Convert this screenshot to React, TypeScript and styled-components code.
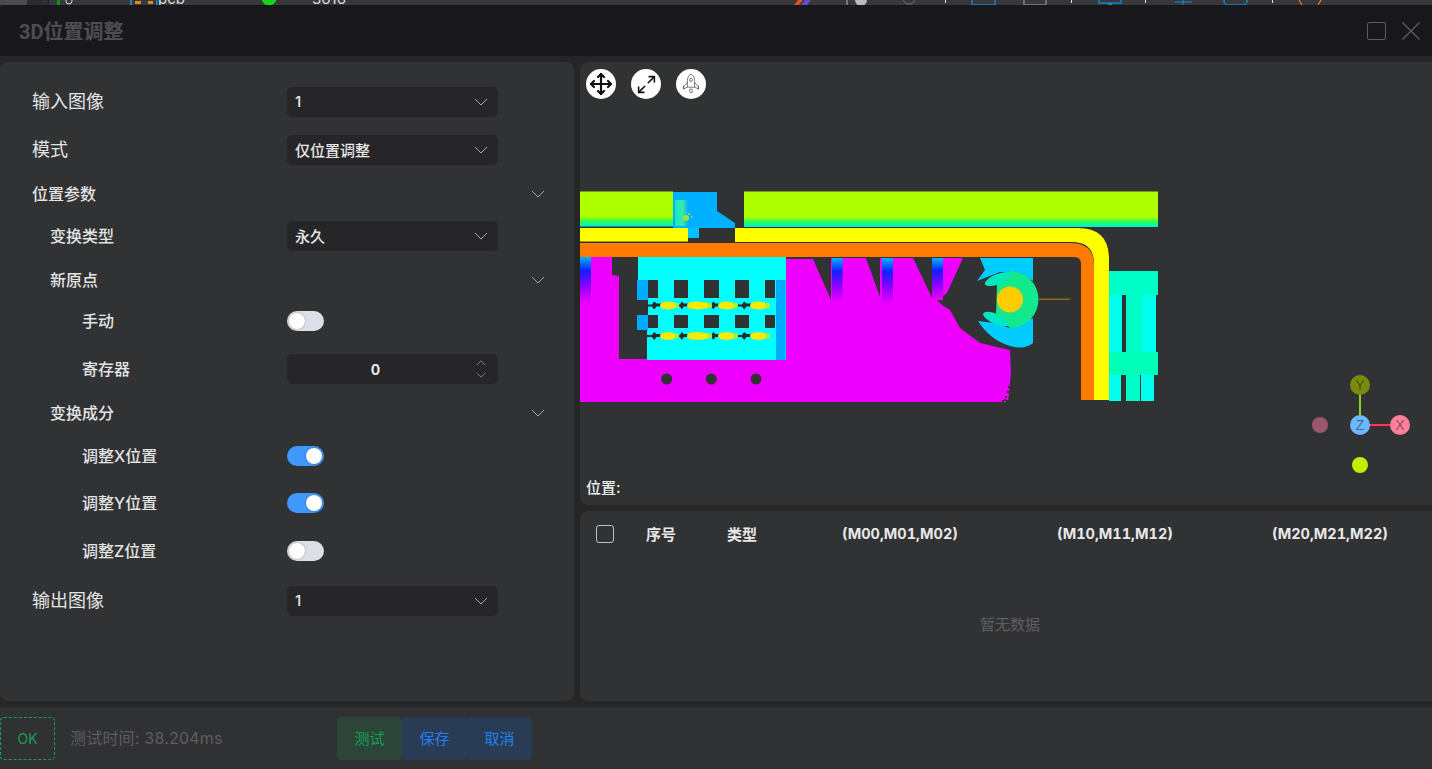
import styled, { createGlobalStyle } from "styled-components";
import { Move, Maximize2 } from "lucide-react";

const GlobalStyle = createGlobalStyle`
  html, body {
    margin: 0;
    padding: 0;
    background: #262627;
  }
  * { box-sizing: border-box; }
`;

const CJK = `"Inter", "Noto Sans CJK SC", sans-serif`;

// the window behind the dialog, only its lower edge is still visible
function BackWindowEdge() {
  return (
    <BackEdge viewBox="0 0 1432 5">
      <rect x="0" y="0" width="27" height="5" fill="#4a4b4e" />
      <rect x="27" y="0" width="15" height="5" fill="#2b2c2e" />
      <rect x="42" y="0" width="6" height="5" fill="#2f3032" />
      <rect x="48" y="0" width="1" height="5" fill="#222" />
      <rect x="57" y="0" width="3" height="5" fill="#1a8a1a" />
      <rect x="66" y="-6" width="6" height="10" rx="3" fill="none" stroke="#ddd" strokeWidth="1" />
      <rect x="130" y="0" width="2" height="5" fill="#1787c9" />
      <rect x="135" y="1" width="6" height="3" fill="#e08a1c" />
      <rect x="148" y="1" width="5" height="3" fill="#e08a1c" />
      <rect x="156" y="0" width="1.5" height="5" fill="#1787c9" />
      <text x="158" y="4" fill="#ddd" fontSize="15" fontFamily="Inter, sans-serif">pcb</text>
      <circle cx="269" cy="-2" r="7.5" fill="#19d319" />
      <text x="312" y="4" fill="#ddd" fontSize="15" fontFamily="Inter, sans-serif">3616</text>
      <path d="M794 5l4-5h5l-4 5z" fill="#e0561c" />
      <path d="M801 5l4-5h6l-4 5z" fill="#6050d0" />
      <rect x="846" y="0" width="2" height="5" fill="#777" />
      <circle cx="861" cy="0" r="6" fill="#bbb" />
      <circle cx="909" cy="-2" r="6" fill="none" stroke="#777" />
      {[945, 1071, 1145, 1272].map(x => <rect key={x} x={x} y="0" width="1" height="3" fill="#ddd" />)}
      <rect x="972" y="-4" width="23" height="9" fill="none" stroke="#1787c9" strokeWidth="1.4" />
      <rect x="1024" y="-4" width="22" height="9" fill="none" stroke="#888" strokeWidth="1.4" />
      <rect x="1099" y="-4" width="22" height="7" fill="none" stroke="#1787c9" strokeWidth="1.4" />
      <rect x="1108" y="3" width="4" height="2" fill="#1787c9" />
      <path d="M1175 2h17M1183 0v5" stroke="#1787c9" strokeWidth="1.2" />
      <rect x="1224" y="-8" width="23" height="13" rx="4" fill="none" stroke="#1787c9" strokeWidth="1.4" />
      <path d="M1299 0l3 5M1321 0l-3 5" stroke="#d98a1c" strokeWidth="1.2" />
    </BackEdge>
  );
}

function Chevron({ up }: { up?: boolean }) {
  return (
    <ChevronIcon viewBox="0 0 14 8">
      <path d={up ? "M1 7l6-6 6 6" : "M1 1l6 6 6-6"} />
    </ChevronIcon>
  );
}

function CloseIcon() {
  return (
    <svg width="18" height="18" viewBox="0 0 18 18" stroke="#5c5c60" strokeWidth="1.3">
      <path d="M0.500 0.500L17.500 17.500M17.500 0.500L0.500 17.500" />
    </svg>
  );
}

function RocketIcon() {
  return (
    <svg width="20" height="22" viewBox="0 0 20 22" fill="none" stroke="#444" strokeWidth="0.7">
      <path d="M10 1c2.600 1.600 3.600 4 3.600 6.600v6.600H6.400V7.600C6.400 5 7.400 2.600 10 1z" />
      <circle cx="10" cy="6.800" r="1.500" />
      <path d="M6.400 9.500L2.800 13.500v2.300l3.600-1.600M13.600 9.500l3.600 4v2.300l-3.600-1.600" />
      <path d="M2.500 12.500v4M17.500 12.500v4" />
      <ellipse cx="10" cy="17.800" rx="1.400" ry="2" />
    </svg>
  );
}

function Select({ value }: { value: string }) {
  return (
    <SelectBox>
      <SelectText>{value}</SelectText>
      <Chevron />
    </SelectBox>
  );
}

function Streak({ y }: { y: number }) {
  const spindles: [number, number][] = [[647, 16], [676, 13], [707, 14], [737, 16]];
  const blobs: [number, number][] = [[662, 12], [689, 18], [720, 13], [752, 13]];
  return (
    <g>
      {spindles.map(([x, w]) => (
        <path
          key={x}
          d={`M${x} ${y - 1}h${w * 0.3}l${w * 0.15} -3l${w * 0.15} 2h${w * 0.4}v3h${-w * 0.4}l${-w * 0.15} 3l${-w * 0.15} -3h${-w * 0.3}z`}
          fill="#2a2b2d"
        />
      ))}
      {blobs.map(([x, w]) => (
        <g key={x}>
          <rect x={x - 2} y={y - 2.500} width={w + 7} height="5" rx="2" fill="#a8f030" />
          <path
            d={`M${x} ${y - 3}l${w * 0.4} -1l${w * 0.6} 1l1 3l-1 3l${-w * 0.5} 1l${-w * 0.5} -1l-1 -3z`}
            fill="#f6ea00"
          />
        </g>
      ))}
    </g>
  );
}

function PointCloud() {
  const holeXs: [number, number][] = [[648, 10], [674, 14], [704, 15], [735, 14], [765, 10]];
  const speckles: [number, number][] = [[1005, 396], [1007, 391], [1004, 399], [1008, 386], [1002, 400], [1006, 400]];
  const bg = "#313234";
  return (
    <CloudSvg viewBox="580 62 860 443">
      <defs>
        <linearGradient id="bar" x1="0" y1="0" x2="0" y2="1">
          <stop offset="0" stopColor="#aeff00" />
          <stop offset="0.72" stopColor="#aeff00" />
          <stop offset="0.84" stopColor="#30ff50" />
          <stop offset="1" stopColor="#00f0d0" />
        </linearGradient>
        <linearGradient id="strip" x1="0" y1="0" x2="0" y2="1">
          <stop offset="0" stopColor="#00b4ff" />
          <stop offset="0.3" stopColor="#1020ff" />
          <stop offset="0.65" stopColor="#9000ff" />
          <stop offset="1" stopColor="#ee00ff" />
        </linearGradient>
        <linearGradient id="patch" x1="0" y1="0" x2="1" y2="0">
          <stop offset="0" stopColor="#10e8d0" />
          <stop offset="0.6" stopColor="#40e8a0" />
          <stop offset="1" stopColor="#00b0ff" />
        </linearGradient>
      </defs>

      <rect x="580" y="191.500" width="93" height="35" fill="url(#bar)" />
      <rect x="744" y="191.500" width="414" height="35.500" fill="url(#bar)" />
      <path d="M673 192H717V211L735 223V228H673Z" fill="#00b0ff" />
      <rect x="688" y="228" width="11" height="10" fill="#00c0ff" />
      <rect x="675" y="200" width="13" height="26" fill="url(#patch)" />
      <circle cx="686" cy="218" r="3" fill="#90e840" />
      <circle cx="689" cy="214" r="1" fill="#90e840" />
      <circle cx="692" cy="217" r="1" fill="#60e870" />

      <rect x="580" y="228" width="108" height="13.500" fill="#ffff00" />
      <path d="M735 228H1078Q1109 228 1109 259V400H1094V264Q1094 242 1072 242H735Z" fill="#ffff00" />
      <path d="M580 243H1070Q1094 243 1094 265V400H1081V264Q1081 257 1074 257H580Z" fill="#ff7a00" />

      <path
        d="M580 257H612V275L619 276V359H647V360H786V259H813L831 300V258H842V258H866L880 297V258H908L913 258L932 298V258H963L947 293L943 296L937 300L942 305L950 310L960 328L980 343L1010 350L1011 373L1008 402H580Z"
        fill="#ee00ff"
      />
      {speckles.map(([x, y]) => <rect key={`${x}-${y}`} x={x} y={y} width="2" height="2" fill={bg} />)}
      <rect x="580" y="257" width="11" height="45" fill="url(#strip)" />
      <rect x="832" y="258" width="10.500" height="44" fill="url(#strip)" />
      <rect x="882" y="258" width="11" height="46" fill="url(#strip)" />
      <rect x="932" y="258" width="11" height="42" fill="url(#strip)" />

      <path d="M638 257H786V360H647V330H638Z" fill="#00ffff" />
      <rect x="776" y="280" width="9.500" height="80" fill="#00aaff" />
      <rect x="637" y="280" width="11" height="20" fill="#00aaff" />
      <rect x="637" y="315" width="11" height="15" fill="#00aaff" />
      <rect x="637" y="300" width="11" height="15" fill={bg} />
      {[280, 315].map(y =>
        holeXs.map(([x, w]) => <rect key={`${x}-${y}`} x={x} y={y} width={w} height={y === 280 ? 18 : 13} fill={bg} />)
      )}
      <Streak y={305.500} />
      <Streak y={336} />
      {[666.700, 711.300, 756].map(x => <circle key={x} cx={x} cy="379" r="5.500" fill={bg} />)}

      <path d="M980 258H1033V281L1020 273L1000 272L977 281L985 270Z" fill="#00ccff" />
      <path d="M978 321Q990 340 1010 346Q1025 350 1033 343V318L1010 328L995 323Z" fill="#00ccff" />
      <path d="M1010 271A28.500 28.500 0 0 1 1010 328L996 316L997 283Z" fill="#12e88c" />
      <ellipse cx="998" cy="279" rx="14" ry="5" transform="rotate(-22 998 279)" fill="#00e8c0" />
      <ellipse cx="996" cy="319" rx="14" ry="5" transform="rotate(24 996 319)" fill="#00e8c0" />
      <circle cx="1010" cy="299.500" r="13" fill="#ffcc00" />
      <rect x="1039" y="298.500" width="31" height="1.500" fill="#8a6c18" />

      <rect x="1109" y="271" width="49" height="24" fill="#00ffc8" />
      <rect x="1109" y="295" width="13" height="57" fill="#00ffee" />
      <rect x="1126" y="295" width="16" height="57" fill="#00ffc8" />
      <rect x="1142" y="295" width="14" height="57" fill="#00ffee" />
      <rect x="1109" y="352" width="49" height="23" fill="#00ffb8" />
      <rect x="1109" y="375" width="12" height="26" fill="#00ffee" />
      <rect x="1126" y="375" width="14" height="26" fill="#00ffc8" />
      <rect x="1141" y="375" width="13" height="26" fill="#00ffee" />
    </CloudSvg>
  );
}

function AxisGizmo() {
  return (
    <GizmoSvg viewBox="0 0 110 100">
      <line x1="50" y1="50" x2="50" y2="10" stroke="#8fd41c" strokeWidth="2" />
      <line x1="50" y1="50" x2="90" y2="50" stroke="#ff3653" strokeWidth="2" />
      <circle cx="50" cy="10" r="10" fill="#7b8b10" />
      <circle cx="90" cy="50" r="10" fill="#ff7f9b" />
      <circle cx="50" cy="50" r="10" fill="#6cb9ff" />
      <circle cx="10" cy="50" r="8" fill="#9a566c" />
      <circle cx="50" cy="90" r="8" fill="#c4ee00" />
      <GizmoLabel x="50" y="15">Y</GizmoLabel>
      <GizmoLabel x="90" y="55">X</GizmoLabel>
      <GizmoLabel x="50" y="55">Z</GizmoLabel>
    </GizmoSvg>
  );
}

export default function App() {
  return (
    <Page>
      <GlobalStyle />
      <BackWindowEdge />
      <Header>
        <Title>3D位置调整</Title>
        <WindowButtons>
          <MaxButton />
          <CloseIcon />
        </WindowButtons>
      </Header>
      <Body>
        <FormPanel>
          <Row $gap={0}>
            <BigLabel>输入图像</BigLabel>
            <Select value="1" />
          </Row>
          <Row $gap={18}>
            <BigLabel>模式</BigLabel>
            <Select value="仅位置调整" />
          </Row>
          <Row $gap={14}>
            <Label>位置参数</Label>
            <SectionToggle><Chevron /></SectionToggle>
          </Row>
          <Row $gap={12}>
            <Label $indent={18}>变换类型</Label>
            <Select value="永久" />
          </Row>
          <Row $gap={14}>
            <Label $indent={18}>新原点</Label>
            <SectionToggle><Chevron /></SectionToggle>
          </Row>
          <Row $gap={11}>
            <Label $indent={50}>手动</Label>
            <Switch $on={false}><Knob /></Switch>
          </Row>
          <Row $gap={18}>
            <Label $indent={50}>寄存器</Label>
            <NumberBox>
              <NumberValue>0</NumberValue>
              <Stepper>
                <Chevron up />
                <Chevron />
              </Stepper>
            </NumberBox>
          </Row>
          <Row $gap={14}>
            <Label $indent={18}>变换成分</Label>
            <SectionToggle><Chevron /></SectionToggle>
          </Row>
          <Row $gap={13}>
            <Label $indent={50}>调整X位置</Label>
            <Switch $on><Knob /></Switch>
          </Row>
          <Row $gap={17}>
            <Label $indent={50}>调整Y位置</Label>
            <Switch $on><Knob /></Switch>
          </Row>
          <Row $gap={18}>
            <Label $indent={50}>调整Z位置</Label>
            <Switch $on={false}><Knob /></Switch>
          </Row>
          <Row $gap={20}>
            <BigLabel>输出图像</BigLabel>
            <Select value="1" />
          </Row>
        </FormPanel>

        <RightColumn>
          <Viewer>
            <PointCloud />
            <Toolbar>
              <RoundButton><Move size={24} strokeWidth={2.2} color="#111" /></RoundButton>
              <RoundButton><Maximize2 size={21} strokeWidth={1.8} color="#111" /></RoundButton>
              <RoundButton><RocketIcon /></RoundButton>
            </Toolbar>
            <AxisGizmo />
            <PositionText>位置:</PositionText>
          </Viewer>
          <TablePanel>
            <TableHead>
              <HeadCell><Checkbox /></HeadCell>
              <HeadCell>序号</HeadCell>
              <HeadCell>类型</HeadCell>
              <MatrixCell>(M00,M01,M02)</MatrixCell>
              <MatrixCell>(M10,M11,M12)</MatrixCell>
              <MatrixCell>(M20,M21,M22)</MatrixCell>
            </TableHead>
            <EmptyText>暂无数据</EmptyText>
          </TablePanel>
        </RightColumn>
      </Body>
      <Footer>
        <OkBadge>OK</OkBadge>
        <TimeText>测试时间: 38.204ms</TimeText>
        <ActionGroup>
          <ActionButton $kind="green">测试</ActionButton>
          <ActionButton $kind="blue">保存</ActionButton>
          <ActionButton $kind="blue">取消</ActionButton>
        </ActionGroup>
      </Footer>
    </Page>
  );
}

const Page = styled.div`
  width: 1432px;
  height: 769px;
  overflow: hidden;
  display: flex;
  flex-direction: column;
  background: #262627;
  font-family: ${CJK};
`;

const BackEdge = styled.svg`
  display: block;
  width: 1432px;
  height: 5px;
  flex: none;
  background: #37383b;
`;

const Header = styled.div`
  height: 51px;
  flex: none;
  display: flex;
  align-items: center;
  justify-content: space-between;
  padding: 0 12px 0 19px;
  background: #18181c;
  border-radius: 4px 0 0 0;
`;

const Title = styled.div`
  font-family: "Roboto", "Noto Sans CJK SC", sans-serif;
  font-size: 20px;
  font-weight: 700;
  color: #4e4e52;
`;

const WindowButtons = styled.div`
  display: flex;
  align-items: center;
  gap: 16px;
`;

const MaxButton = styled.div`
  width: 19px;
  height: 18px;
  border: 1.5px solid #5c5c60;
  border-radius: 2px;
`;

const Body = styled.div`
  height: 651px;
  flex: none;
  display: flex;
  gap: 6px;
  padding-top: 6px;
  padding-bottom: 6px;
`;

const FormPanel = styled.div`
  width: 574px;
  flex: none;
  padding-top: 25px;
  background: #313234;
  border-radius: 8px;
`;

const Row = styled.div<{ $gap: number }>`
  height: 30px;
  margin-top: ${p => p.$gap}px;
  padding-left: 32px;
  display: flex;
  align-items: center;
`;

const Label = styled.div<{ $indent?: number }>`
  width: 255px;
  flex: none;
  padding-left: ${p => p.$indent ?? 0}px;
  padding-bottom: 3px;
  font-size: 16px;
  font-weight: 500;
  color: #e4e4e4;
`;

const BigLabel = styled(Label)`
  font-size: 18px;
  font-weight: 400;
  padding-bottom: 4px;
`;

const SelectBox = styled.div`
  width: 211px;
  height: 30px;
  display: flex;
  align-items: center;
  justify-content: space-between;
  padding: 0 10px 0 8px;
  background: #262628;
  border-radius: 5px;
  font-size: 15px;
  font-weight: 500;
  color: #e8e8e8;
`;

const SelectText = styled.span`
  padding-bottom: 1px;
`;

const ChevronIcon = styled.svg`
  display: block;
  width: 14px;
  height: 8px;
  fill: none;
  stroke: #a8a8a8;
  stroke-width: 1;
`;

const SectionToggle = styled.div`
  width: 258px;
  display: flex;
  justify-content: flex-end;
`;

const Switch = styled.div<{ $on: boolean }>`
  width: 37px;
  height: 20px;
  padding: 2px;
  display: flex;
  justify-content: ${p => (p.$on ? "flex-end" : "flex-start")};
  background: ${p => (p.$on ? "#4098fc" : "#dcdfe6")};
  border-radius: 10px;
`;

const Knob = styled.div`
  width: 16px;
  height: 16px;
  background: #fff;
  border-radius: 50%;
  box-shadow: 0 0 2px rgba(0, 0, 0, 0.35);
`;

const NumberBox = styled(SelectBox)`
  position: relative;
  justify-content: center;
  padding: 0;
`;

const NumberValue = styled.span`
  font-weight: 700;
  font-size: 14px;
  transform: translateX(-17px);
`;

const Stepper = styled.div`
  position: absolute;
  right: 12px;
  top: 6px;
  display: flex;
  flex-direction: column;
  gap: 6px;

  svg {
    width: 10px;
    height: 6px;
  }
`;

const RightColumn = styled.div`
  width: 860px;
  flex: none;
  display: flex;
  flex-direction: column;
  gap: 6px;
`;

const Viewer = styled.div`
  height: 443px;
  flex: none;
  position: relative;
  padding: 7px 6px;
  display: flex;
  flex-direction: column;
  background: #313234;
  border-radius: 8px;
  overflow: hidden;
`;

const CloudSvg = styled.svg`
  position: absolute;
  left: 0;
  top: 0;
  width: 860px;
  height: 443px;
`;

const GizmoSvg = styled.svg`
  position: absolute;
  left: 730px;
  top: 313px;
  width: 110px;
  height: 100px;
`;

const GizmoLabel = styled.text`
  font-family: "Liberation Sans", sans-serif;
  font-size: 14px;
  text-anchor: middle;
  fill: rgba(0, 0, 0, 0.45);
`;

const Toolbar = styled.div`
  position: relative;
  display: flex;
  gap: 15px;
`;

const RoundButton = styled.div`
  width: 30px;
  height: 30px;
  display: flex;
  align-items: center;
  justify-content: center;
  background: #fff;
  border-radius: 50%;
`;

const PositionText = styled.div`
  position: relative;
  margin-top: auto;
  margin-bottom: 1px;
  font-size: 15px;
  font-weight: 500;
  color: #f0f0f0;
`;

const TablePanel = styled.div`
  flex: 1;
  display: flex;
  flex-direction: column;
  background: #313234;
  border-radius: 8px;
`;

const TableHead = styled.div`
  height: 46px;
  flex: none;
  display: grid;
  grid-template-columns: 66px 81px 65.5px 215px 215px 215px;
  align-items: center;
  font-size: 15px;
  font-weight: 700;
  color: #e8e8e8;
`;

const HeadCell = styled.div`
  display: flex;
  align-items: center;
  padding-bottom: 2px;
`;

const MatrixCell = styled.div`
  padding-bottom: 2px;
  text-align: center;
  font-size: 14.5px;
  font-variant-numeric: tabular-nums;
`;

const Checkbox = styled.div`
  width: 18px;
  height: 18px;
  margin-left: 16px;
  margin-top: 2px;
  border: 1.5px solid #c0c0c4;
  border-radius: 3px;
`;

const EmptyText = styled.div`
  margin-top: 56px;
  text-align: center;
  font-size: 15px;
  color: #5f5f62;
`;

const Footer = styled.div`
  flex: 1;
  display: flex;
  align-items: flex-start;
  padding-top: 10px;
  background: #303133;
`;

const OkBadge = styled.div`
  width: 55px;
  height: 43px;
  display: flex;
  align-items: center;
  justify-content: center;
  border: 1px dashed #18a058;
  border-radius: 4px;
  font-size: 14px;
  color: #18a058;
`;

const TimeText = styled.div`
  width: 282px;
  height: 43px;
  line-height: 42px;
  padding-left: 15px;
  font-size: 16px;
  letter-spacing: 0.2px;
  color: #5e5e60;
`;

const ActionGroup = styled.div`
  display: flex;
`;

const ActionButton = styled.div<{ $kind: "green" | "blue" }>`
  width: 65px;
  height: 43px;
  padding-bottom: 2px;
  display: flex;
  align-items: center;
  justify-content: center;
  border-radius: 4px;
  font-size: 15px;
  color: ${p => (p.$kind === "green" ? "#18a058" : "#2080f0")};
  background: ${p => (p.$kind === "green" ? "#2c4538" : "#2a3c55")};
`;
